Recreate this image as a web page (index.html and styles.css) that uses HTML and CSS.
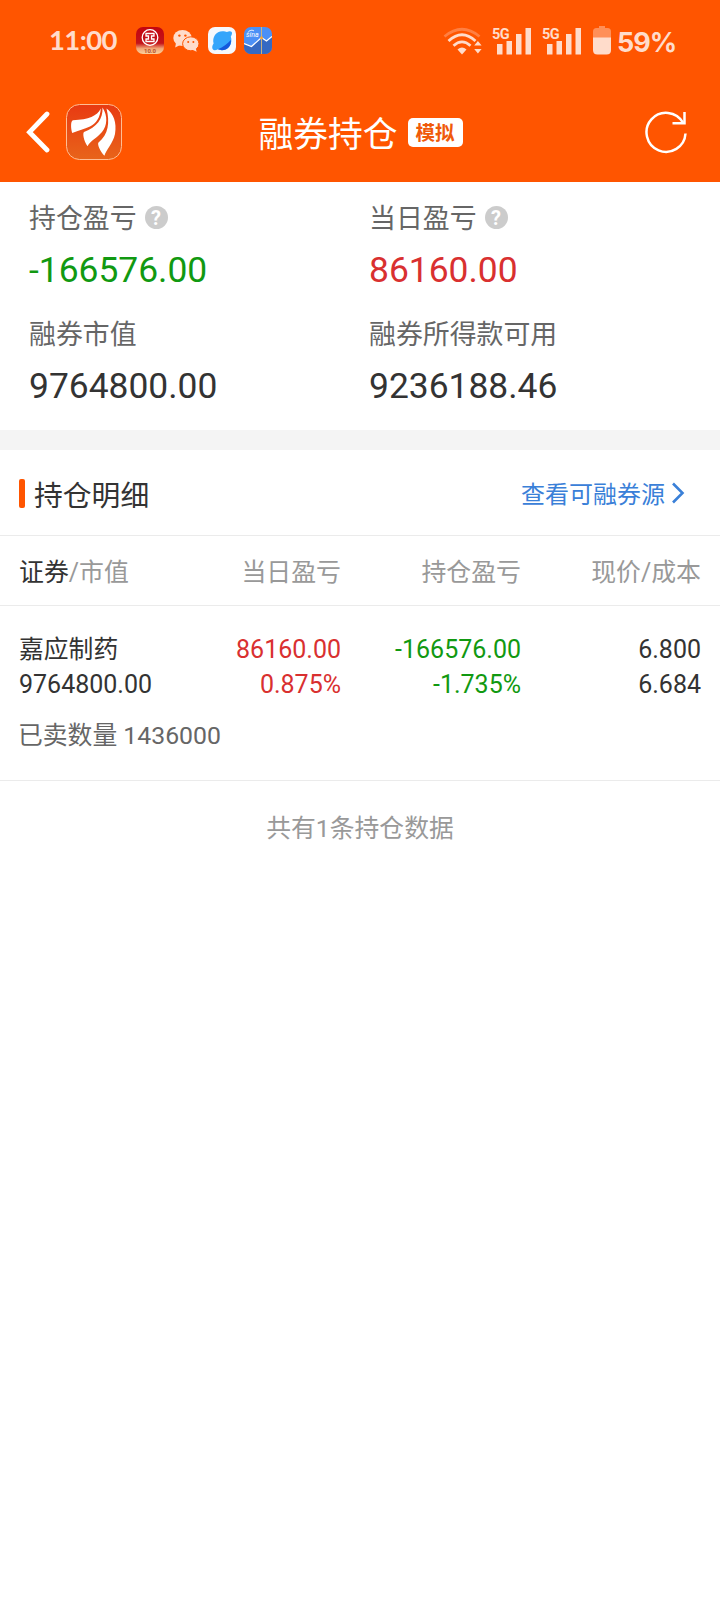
FILE: index.html
```html
<!DOCTYPE html>
<html lang="zh-CN">
<head>
    <meta charset="UTF-8">
    <meta name="viewport" content="width=device-width, initial-scale=1.0">
    <title>融券持仓</title>
    <link rel="stylesheet" href="styles.css">
</head>
<body>
    <header class="header">
        <div class="status-bar">
            <span class="time">11:00</span>
            <div class="app-icons">
                <svg width="28" height="28" viewBox="0 0 28 28">
                    <defs>
                        <linearGradient id="bank" x1="0" y1="0" x2="0" y2="1">
                            <stop offset="0" stop-color="#c4060f"/>
                            <stop offset="0.6" stop-color="#c4141a"/>
                            <stop offset="0.8" stop-color="#f3a878"/>
                            <stop offset="1" stop-color="#fbd29c"/>
                        </linearGradient>
                    </defs>
                    <rect width="28" height="27" rx="7" fill="url(#bank)"/>
                    <circle cx="14" cy="10.5" r="7.8" fill="none" stroke="#fff" stroke-width="1.3"/>
                    <path d="M10 6.500h8v2.500h-2.500v3H18v2.500h-8V12h2.500V9H10z" fill="none" stroke="#fff" stroke-width="1.300"/>
                    <text x="14" y="26.3" class="bank-label">10.0</text>
                </svg>
                <svg width="28" height="28" viewBox="0 0 28 28">
                    <ellipse cx="10.5" cy="11" rx="9.2" ry="8" fill="#ffdccb"/>
                    <path d="M4 16l-.8 4.4 4.4-2.2z" fill="#ffdccb"/>
                    <ellipse cx="18.8" cy="16.8" rx="8.2" ry="7" fill="#ffdccb" stroke="#ff5500" stroke-width="1"/>
                    <path d="M20 22.5l4.6 2.2-1-4z" fill="#ffdccb"/>
                    <circle cx="7.4" cy="8.6" r="1.2" fill="#ff5500"/>
                    <circle cx="13.4" cy="8.6" r="1.2" fill="#ff5500"/>
                    <circle cx="16.2" cy="14.9" r="1" fill="#ff5500"/>
                    <circle cx="21.4" cy="14.9" r="1" fill="#ff5500"/>
                </svg>
                <svg width="28" height="28" viewBox="0 0 28 28">
                    <rect width="28" height="27" rx="7" fill="#f6f8fc"/>
                    <path d="M5 22.6C3.6 21.2 4.2 18.6 5.6 16.6 4 10 8 4.4 14.5 4.2c2 0 3.4.4 4.4.9 2.2-1.2 4-1.2 4.8 0 .7 1.1.2 2.7-.9 4.5 2.2 7-2 13.6-8.8 13.6-1.8 0-3-.4-4-.9-2.2 1.1-4.2 1.3-5 .3z" fill="#35a5fb"/>
                    <path d="M22.8 13c.8 5.5-3.3 10.2-8.8 10.2-1.8 0-3-.4-4-.9 5-2.2 9.500-5.500 12.800-9.300z" fill="#1458dc"/>
                </svg>
                <svg width="28" height="28" viewBox="0 0 28 28">
                    <defs><clipPath id="tile"><rect width="28" height="27" rx="7"/></clipPath></defs>
                    <g clip-path="url(#tile)">
                        <rect width="28" height="27" fill="#4b90f6"/>
                        <path d="M0 16.5l7.5 3L17.500 10.500l5 3.500L28 9.500V27H0z" fill="#3569c2"/>
                        <path d="M0 16.5l7.5 3L17.500 10.500l5 3.500L28 9.500" fill="none" stroke="#fff" stroke-width="1.300"/>
                        <path d="M17.5 0v27" stroke="#d9b878" stroke-width="0.9"/>
                        <circle cx="17.5" cy="10.8" r="1.5" fill="#f7a63a"/>
                        <path d="M4 5.5c1-2 4-3 6-1.5" fill="none" stroke="#fff" stroke-width="1"/>
                        <text x="2" y="10" class="sina-label">sina</text>
                    </g>
                </svg>
            </div>
            <div class="status-right">
                <svg class="wifi" width="40" height="30" viewBox="0 0 40 30">
                    <g fill="none" stroke="#ffdccb" stroke-width="2.8">
                        <path d="M1.5 10.5Q19 -4 36.5 10.5" stroke="#ff7f42"/>
                        <path d="M5.5 15Q19 2.500 32.500 15"/>
                        <path d="M10.5 19.700Q19 12 27.500 19.700"/>
                    </g>
                    <path d="M14.5 23.5q4.500-4 9 0L19 28.500z" fill="#ffdccb"/>
                    <path d="M31.200 19.500l3.700-4.500 3.700 4.500zM31.200 23l3.700 4.500 3.700-4.500z" fill="#ffdccb"/>
                </svg>
                <svg class="signal" width="40" height="30" viewBox="0 0 40 30">
                    <text x="0" y="13" class="net-label">5G</text>
                    <path d="M5 18h5.500v10.500H5zM14.500 15H20v13.500h-5.500zM24 8h5.500v20.500H24zM33.500 2H39v26.500h-5.500z" fill="#ffdccb"/>
                </svg>
                <svg class="signal" width="40" height="30" viewBox="0 0 40 30">
                    <text x="0" y="13" class="net-label">5G</text>
                    <path d="M5 18h5.500v10.500H5zM14.500 15H20v13.500h-5.500zM24 8h5.500v20.500H24zM33.500 2H39v26.500h-5.500z" fill="#ffdccb"/>
                </svg>
                <svg class="battery" width="18" height="30" viewBox="0 0 18 30">
                    <path d="M6 0h6v2h2.500Q18 2 18 5.500V12H0V5.500Q0 2 3.500 2H6z" fill="#ff8f58"/>
                    <path d="M0 11.500h18V24q0 4.500-4.500 4.500h-9Q0 28.500 0 24z" fill="#ffdccb"/>
                </svg>
                <span class="percent">59%</span>
            </div>
        </div>
        <nav class="nav">
            <div class="nav-left">
                <svg width="24" height="44" viewBox="0 0 24 44">
                    <path d="M21 4L3.500 22.200 21 40" fill="none" stroke="#fff" stroke-width="4.800" stroke-linecap="round"/>
                </svg>
                <svg class="logo" width="56" height="56" viewBox="0 0 56 56">
                    <defs>
                        <linearGradient id="logo" x1="0" y1="0" x2="0" y2="1">
                            <stop offset="0" stop-color="#e83a12"/>
                            <stop offset="1" stop-color="#e8641a"/>
                        </linearGradient>
                    </defs>
                    <rect x="0.5" y="0.5" width="55" height="55" rx="13" fill="url(#logo)" stroke="#ffbe94"/>
                    <path d="M34.8 4.500C31 12 23 15.500 7 16.200 4.600 16.500 4.600 24 6.200 29 13 26 18 25.500 24 22.500c6-3.200 10.300-8.500 10.800-18z" fill="#fff"/>
                    <path d="M36.5 3.500C37 15 31 23 18 28c-1.500 1-.5 8.500 3.500 14.300C24.500 36.500 31 34 36 28c5.300-6.500 6-16 .5-24.500z" fill="#fff"/>
                    <path d="M40.5 4.500c3.500 14 2 26-8 34-1.500 1.500 1.500 9 5.900 13.300C40 46 47 39.500 49 30c2-11.500-1.500-20.500-8.500-25.500z" fill="#fff"/>
                </svg>
            </div>
            <div class="nav-title">
                <h1>融券持仓</h1>
                <span class="badge">模拟</span>
            </div>
            <svg class="refresh" width="44" height="44" viewBox="0 0 44 44">
                <path d="M41.5 23.500A19.500 19.500 0 1 1 39 12.700" fill="none" stroke="#fff" stroke-width="2.500"/>
                <path d="M40.5 2v11.300H28.500" fill="none" stroke="#fff" stroke-width="2.500"/>
            </svg>
        </nav>
    </header>

    <section class="summary">
        <div class="summary-item">
            <div class="label">持仓盈亏 <span class="help">?</span></div>
            <div class="value green">-166576.00</div>
        </div>
        <div class="summary-item">
            <div class="label">当日盈亏 <span class="help">?</span></div>
            <div class="value red">86160.00</div>
        </div>
        <div class="summary-item">
            <div class="label">融券市值</div>
            <div class="value">9764800.00</div>
        </div>
        <div class="summary-item">
            <div class="label">融券所得款可用</div>
            <div class="value">9236188.46</div>
        </div>
    </section>

    <section class="detail">
        <div class="detail-head">
            <h2>持仓明细</h2>
            <a class="more"><span>查看可融券源</span>
                <svg width="14" height="22" viewBox="0 0 14 22">
                    <path d="M2 1.5l9.5 9.500L2 20.500" fill="none" stroke="#3a80d8" stroke-width="2.600"/>
                </svg>
            </a>
        </div>
        <div class="row columns">
            <div><span class="active">证券</span>/市值</div>
            <div>当日盈亏</div>
            <div>持仓盈亏</div>
            <div>现价/成本</div>
        </div>
        <div class="position">
            <div class="row">
                <div class="name">嘉应制药</div>
                <div class="red">86160.00</div>
                <div class="green">-166576.00</div>
                <div>6.800</div>
            </div>
            <div class="row">
                <div>9764800.00</div>
                <div class="red">0.875%</div>
                <div class="green">-1.735%</div>
                <div>6.684</div>
            </div>
            <div class="sold">已卖数量 1436000</div>
        </div>
        <p class="total">共有1条持仓数据</p>
    </section>
</body>
</html>
```
FILE: styles.css
```css
* {
    box-sizing: border-box;
}
body {
    margin: 0;
    min-height: 1604px;
    background: #fff;
    color: #333;
    font-family: Roboto, "Noto Sans CJK SC", sans-serif;
    font-size: 25px;
}
h1, h2, p {
    margin: 0;
    font-weight: normal;
}
svg {
    display: block;
    flex-shrink: 0;
}

/* header */
.header {
    height: 182px;
    background: #ff5500;
    color: #fff;
}
.status-bar {
    display: flex;
    align-items: center;
    height: 82px;
    padding: 0 44px 0 49px;
    color: #ffdccb;
}
.time {
    width: 87px;
    padding-bottom: 2px;
    font-family: Lato, sans-serif;
    font-size: 27.5px;
    font-weight: bold;
    line-height: 32px;
    letter-spacing: -0.6px;
}
.app-icons {
    display: flex;
    gap: 8px;
}
.bank-label {
    font-size: 6px;
    font-weight: bold;
    fill: #b5522c;
    text-anchor: middle;
}
.sina-label {
    font-size: 7px;
    font-style: italic;
    fill: #fff;
}
.status-right {
    display: flex;
    align-items: center;
    margin-left: auto;
}
.wifi {
    margin-right: 9px;
}
.signal {
    margin-right: 10px;
    overflow: visible;
}
.battery {
    margin: 0 6px 0 1px;
}
.net-label {
    font-family: Roboto, sans-serif;
    font-size: 14.5px;
    font-weight: bold;
    letter-spacing: -0.5px;
    fill: #ffdccb;
}
.percent {
    width: 59px;
    padding-top: 3px;
    font-family: Inter, sans-serif;
    font-size: 27px;
    font-weight: bold;
    line-height: 32px;
    letter-spacing: -1px;
}
.nav {
    display: grid;
    grid-template-columns: 1fr auto 1fr;
    align-items: center;
    height: 100px;
    padding: 0 32px 0 26px;
}
.nav-left {
    display: flex;
    align-items: center;
    gap: 16px;
}
.nav-title {
    display: flex;
    align-items: center;
    gap: 10px;
    padding-left: 7px;
}
.nav h1 {
    font-size: 34.8px;
    line-height: 44px;
    padding-top: 5px;
}
.badge {
    width: 55px;
    height: 29px;
    border-radius: 5px;
    background: #fff;
    color: #f05a0a;
    font-size: 19.5px;
    font-weight: bold;
    line-height: 31px;
    text-align: center;
}
.refresh {
    justify-self: end;
}

/* summary */
.summary {
    display: grid;
    grid-template-columns: 340px 1fr;
    grid-auto-rows: 116px;
    height: 248px;
    padding: 10px 0 0 29px;
}
.label {
    display: flex;
    align-items: center;
    gap: 8px;
    height: 52px;
    padding-top: 2px;
    color: #666;
    font-size: 26.9px;
    line-height: 54px;
}
.help {
    width: 23px;
    height: 23px;
    margin-bottom: 4px;
    border-radius: 50%;
    background: #ccc;
    color: #fff;
    font-size: 20px;
    font-weight: bold;
    line-height: 24px;
    text-align: center;
}
.value {
    font-size: 35.4px;
    line-height: 52px;
}
.red {
    color: #d93030;
}
.green {
    color: #119911;
}

/* positions */
.detail {
    border-top: 20px solid #f4f4f4;
}
.detail-head {
    display: flex;
    align-items: center;
    justify-content: space-between;
    height: 86px;
    padding: 0 35px 0 19px;
    border-bottom: 1px solid #ebebeb;
}
.detail-head h2 {
    display: flex;
    align-items: center;
    gap: 9px;
    padding-top: 6px;
    font-size: 28.8px;
    line-height: 40px;
}
.detail-head h2::before {
    content: "";
    width: 6px;
    height: 29px;
    margin-bottom: 5px;
    border-radius: 2px;
    background: #ff5500;
}
.more {
    display: flex;
    align-items: center;
    gap: 6px;
    color: #3a80d8;
    font-size: 24px;
    line-height: 40px;
}
.more span {
    padding-top: 4px;
}
.row {
    display: grid;
    grid-template-columns: 161px 161px 180px 180px;
    padding: 0 19px;
    line-height: 35px;
}
.row > div + div {
    text-align: right;
}
.columns {
    height: 70px;
    border-bottom: 1px solid #ebebeb;
    color: #999;
    font-size: 24.9px;
    line-height: 74px;
}
.active {
    color: #333;
}
.name {
    font-size: 24.8px;
}
.position {
    height: 175px;
    padding-top: 26px;
    border-bottom: 1px solid #ebebeb;
}
.sold {
    padding: 16px 18px 0;
    color: #666;
    font-size: 24.8px;
    line-height: 36px;
}
.total {
    padding-top: 28px;
    color: #999;
    font-size: 24.8px;
    text-align: center;
    line-height: 40px;
}
```
